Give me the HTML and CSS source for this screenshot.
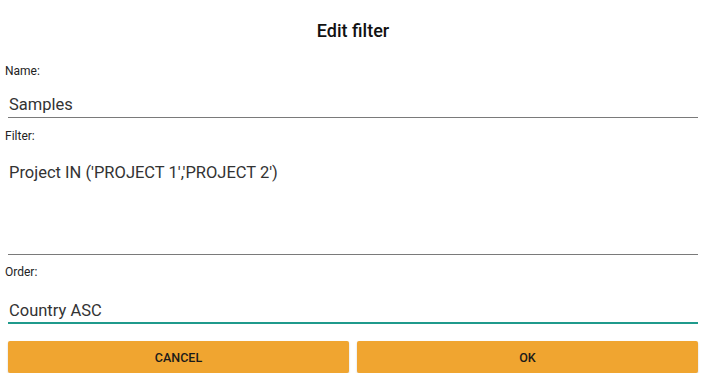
FILE: index.html
```html
<!DOCTYPE html>
<html lang="en">
<head>
<meta charset="UTF-8">
<meta name="viewport" content="width=device-width, initial-scale=1.0">
<title>Edit filter</title>
<link rel="stylesheet" href="styles.css">
</head>
<body>
<div class="dialog">
  <div class="title">Edit filter</div>
  <div class="label">Name:</div>
  <div class="field">Samples</div>
  <div class="label gap">Filter:</div>
  <div class="field area">Project IN ('PROJECT 1','PROJECT 2')</div>
  <div class="label gap2">Order:</div>
  <div class="field focused">Country ASC</div>
  <div class="buttons">
    <button class="btn">CANCEL</button>
    <button class="btn">OK</button>
  </div>
</div>
</body>
</html>
```

FILE: styles.css
```css
body { margin: 0; background: #fff; font-family: Roboto, "Liberation Sans", sans-serif; color: #212121; }
.dialog { padding: 0 9px 0 8px; }
.title { height: 62px; line-height: 62px; text-align: center; font-size: 18px; font-weight: 500; color: #111; }
.label { font-size: 12px; line-height: 18px; margin-left: -3px; color: #222; }
.label.gap { margin-top: 9px; }
.label.gap2 { margin-top: 8px; }
.field { font-size: 16.5px; line-height: 20px; padding: 15px 0 2px 1px; border-bottom: 1px solid #7a7a7a; color: #333; }
.field.area { padding-top: 18px; height: 110px; box-sizing: border-box; }
.field.focused { padding-top: 20px; padding-bottom: 1px; border-bottom: 2px solid #1f9a8c; }
.buttons { display: grid; grid-template-columns: 1fr 1fr; gap: 8px; margin-top: 17px; }
.btn { height: 32px; border: none; border-radius: 2px; background: #f0a530; font-family: Roboto, "Liberation Sans", sans-serif; font-size: 12.5px; font-weight: 500; color: #1a1a1a; box-shadow: 0 1px 2px rgba(0,0,0,0.2); padding: 0; }
```
